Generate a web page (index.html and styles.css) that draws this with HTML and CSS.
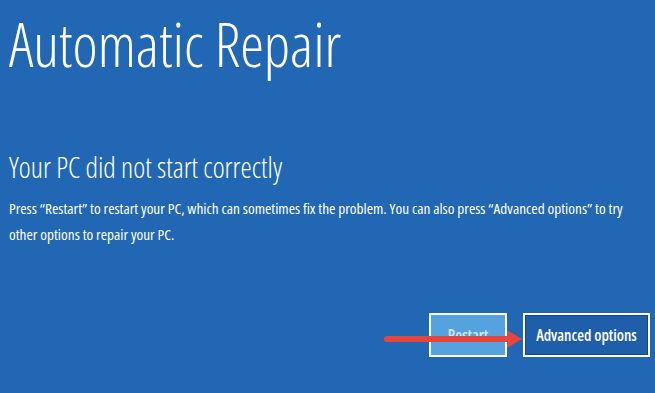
FILE: index.html
```html
<!DOCTYPE html>
<html lang="en">
<head>
<meta charset="utf-8">
<title>Automatic Repair</title>
<link rel="stylesheet" href="styles.css">
</head>
<body>
<main class="screen">
  <h1 class="title">Automatic Repair</h1>
  <h2 class="subtitle">Your PC did not start correctly</h2>
  <p class="message">Press “Restart” to restart your PC, which can sometimes fix the problem. You can also press “Advanced options” to try other options to repair your PC.</p>
  <div class="actions">
    <button class="btn btn-restart">Restart</button>
    <button class="btn btn-advanced">Advanced options</button>
    <svg class="arrow" width="140" height="20" viewBox="0 0 140 20" aria-hidden="true">
      <line x1="3" y1="10" x2="126" y2="10" stroke="#e2463f" stroke-width="6" stroke-linecap="round"/>
      <polygon points="123,1 138,10 123,19" fill="#e2463f"/>
    </svg>
  </div>
</main>
</body>
</html>
```
FILE: styles.css
```css
html, body {
  margin: 0;
  padding: 0;
  background: #2167b3;
}
.screen {
  width: 655px;
  height: 393px;
  box-sizing: border-box;
  padding: 9px 5px 0 9px;
  background: #2167b3;
  color: #ffffff;
  font-family: "Open Sans", "Liberation Sans", sans-serif;
  font-stretch: 75%;
  overflow: hidden;
}
.title {
  margin: 0;
  font-size: 60px;
  line-height: 70px;
  font-weight: 300;
  white-space: nowrap;
}
.subtitle {
  margin: 71px 0 0;
  font-size: 28.5px;
  line-height: 34px;
  font-weight: 300;
  white-space: nowrap;
}
.message {
  margin: 11px 0 0;
  font-size: 15.3px;
  line-height: 26px;
  font-weight: 400;
  width: 641px;
}
.actions {
  position: relative;
  margin-top: 66px;
  display: flex;
  justify-content: flex-end;
  gap: 16px;
}
.btn {
  height: 44px;
  box-sizing: border-box;
  border: 2px solid #ffffff;
  box-shadow: inset 0 0 0 1px #17478a;
  color: #ffffff;
  font-family: "Open Sans", "Liberation Sans", sans-serif;
  font-stretch: 75%;
  font-size: 15.5px;
  font-weight: 600;
  padding: 0;
}
.btn-restart {
  width: 78px;
  background: #55a2de;
  color: #d6e8f7;
  box-shadow: none;
}
.btn-advanced {
  width: 127px;
  background: #1f5eab;
}
.arrow {
  position: absolute;
  left: 375px;
  top: 16px;
}
```
